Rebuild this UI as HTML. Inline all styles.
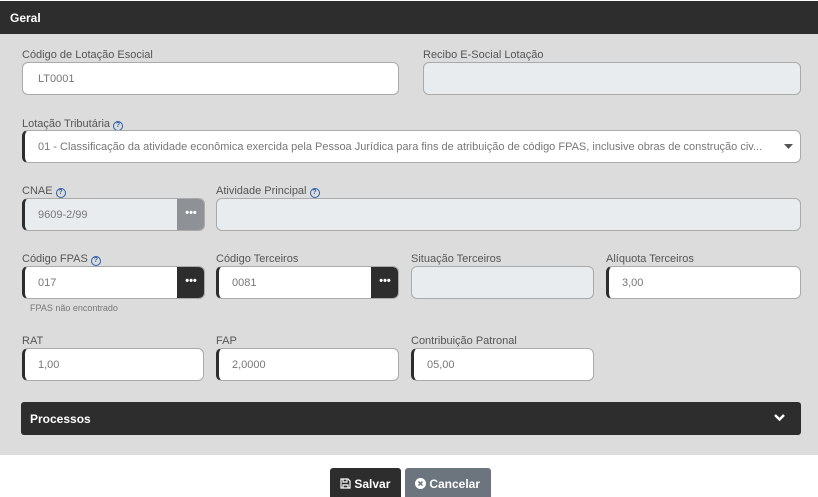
<!DOCTYPE html>
<html><head><meta charset="utf-8"><style>
*{box-sizing:border-box;margin:0;padding:0}
body{width:818px;height:497px;background:#fff;font-family:"Liberation Sans",Arial,sans-serif;position:relative;overflow:hidden}
.hdr{position:absolute;left:0;top:1px;width:818px;height:33px;background:#2d2d2d;color:#fff;font-weight:bold;font-size:12px;padding:10px 0 0 10px}
.panel{position:absolute;left:0;top:34px;width:818px;height:421px;background:#dcdcdc}
.lbl{position:absolute;font-size:11px;color:#555}
.in{position:absolute;height:33px;background:#fff;border:1px solid #aaa;border-left:3px solid #2d2d2d;border-radius:6px;font-size:11px;color:#777;padding:10px 0 0 13px;overflow:hidden;white-space:nowrap}
.ro{background:#e9ecef;border-left:1px solid #aaa}
.btn{position:absolute;top:0;right:-1px;width:28px;height:33px;border-radius:0 6px 6px 0;color:#fff;font-size:11px;text-align:center;line-height:28px;font-weight:bold}
.q{display:inline-block;width:10px;height:10px;border:1.3px solid #2a5ea8;border-radius:50%;font-size:7px;line-height:8px;text-align:center;color:#2a5ea8;font-weight:bold;vertical-align:0;margin-left:3px}
.proc{position:absolute;left:21px;top:402px;width:780px;height:33px;background:#2d2d2d;border-radius:3px;color:#fff;font-weight:bold;font-size:12px;padding:10px 0 0 9px}
.b{position:absolute;top:468px;height:29px;color:#fff;font-weight:bold;font-size:12px;padding:9px 0 0 10px;border-radius:3px 3px 0 0}
</style></head><body>
<div class="hdr">Geral</div>
<div class="panel"></div>
<div class="lbl" style="left:22px;top:49px">Código de Lotação Esocial</div>
<div class="in" style="left:22px;top:62px;width:377px;border-left:1px solid #aaa;padding-left:15px">LT0001</div>
<div class="lbl" style="left:423px;top:49px">Recibo E-Social Lotação</div>
<div class="in ro" style="left:423px;top:62px;width:378px"></div>

<div class="lbl" style="left:22px;top:118px">Lotação Tributária<span class="q">?</span></div>
<div class="in" style="left:22px;top:130px;width:779px">01 - Classificação da atividade econômica exercida pela Pessoa Jurídica para fins de atribuição de código FPAS, inclusive obras de construção civ...
<svg style="position:absolute;right:6px;top:13px" width="10" height="6"><path d="M0 0h9L4.5 5z" fill="#555"/></svg></div>

<div class="lbl" style="left:22px;top:185px">CNAE<span class="q">?</span></div>
<div class="in ro" style="left:22px;top:198px;width:183px;border-left:3px solid #2d2d2d">9609-2/99<div class="btn" style="background:#8e9196">•••</div></div>
<div class="lbl" style="left:216px;top:185px">Atividade Principal<span class="q">?</span></div>
<div class="in ro" style="left:216px;top:198px;width:585px"></div>

<div class="lbl" style="left:22px;top:253px">Código FPAS<span class="q">?</span></div>
<div class="in" style="left:22px;top:266px;width:183px">017<div class="btn" style="background:#2d2d2d">•••</div></div>
<div class="lbl" style="left:30px;top:303px;font-size:9px;color:#777">FPAS não encontrado</div>
<div class="lbl" style="left:216px;top:253px">Código Terceiros</div>
<div class="in" style="left:216px;top:266px;width:183px">0081<div class="btn" style="background:#2d2d2d">•••</div></div>
<div class="lbl" style="left:411px;top:253px">Situação Terceiros</div>
<div class="in ro" style="left:411px;top:266px;width:183px"></div>
<div class="lbl" style="left:606px;top:253px">Alíquota Terceiros</div>
<div class="in" style="left:606px;top:266px;width:195px">3,00</div>

<div class="lbl" style="left:22px;top:335px">RAT</div>
<div class="in" style="left:22px;top:348px;width:182px">1,00</div>
<div class="lbl" style="left:216px;top:335px">FAP</div>
<div class="in" style="left:216px;top:348px;width:183px">2,0000</div>
<div class="lbl" style="left:411px;top:335px">Contribuição Patronal</div>
<div class="in" style="left:411px;top:348px;width:183px">05,00</div>

<div class="proc">Processos
<svg style="position:absolute;right:16px;top:12px" width="11" height="8"><path d="M1 1l4.5 4.5L10 1" stroke="#fff" stroke-width="2.4" fill="none"/></svg></div>

<div class="b" style="left:330px;width:71px;background:#2d2d2d"><svg width="11" height="11" style="vertical-align:-1px"><path d="M1 1h7l2 2v7H1z M3 1v3h4V1 M3 10V7h5v3" stroke="#fff" stroke-width="1.2" fill="none"/></svg> Salvar</div>
<div class="b" style="left:405px;width:86px;background:#6c757d"><svg width="11" height="11" style="vertical-align:-1px"><circle cx="5.5" cy="5.5" r="5.5" fill="#fff"/><path d="M3.5 3.5l4 4M7.5 3.5l-4 4" stroke="#6c757d" stroke-width="1.5"/></svg> Cancelar</div>
</body></html>
